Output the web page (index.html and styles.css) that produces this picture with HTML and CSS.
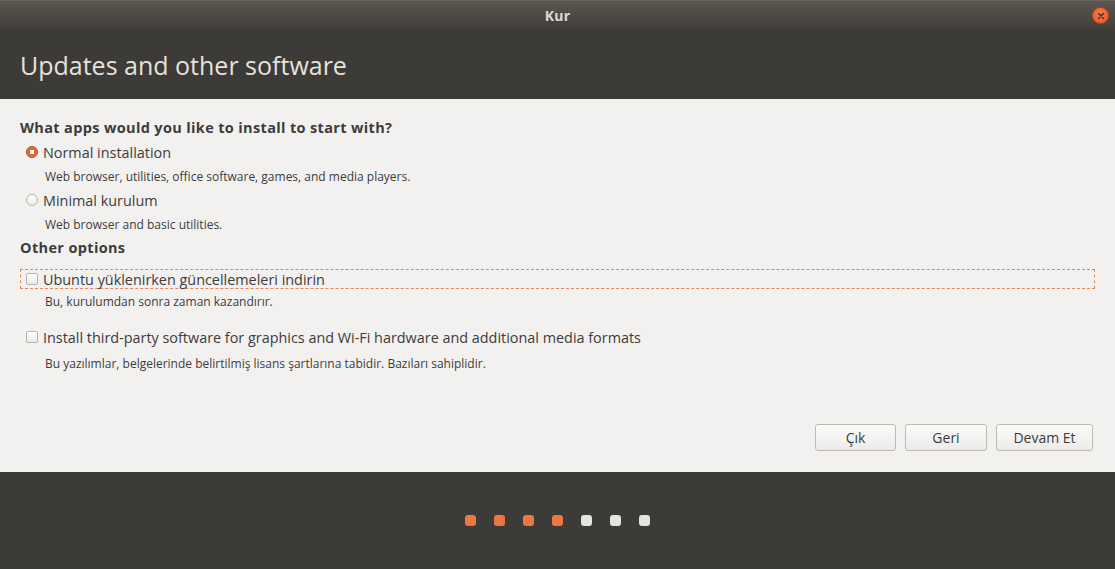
FILE: index.html
```html
<!DOCTYPE html>
<html>
<head>
<meta charset="utf-8">
<link rel="stylesheet" href="styles.css">
</head>
<body>
<div class="window">
  <div class="titlebar">
    <span class="title">Kur</span>
    <span class="close">
      <svg width="10" height="10" viewBox="0 0 10 10"><path d="M2.5 2.5 L7.5 7.5 M7.5 2.5 L2.5 7.5" stroke="#3c2a22" stroke-width="1.3" stroke-linecap="round"/></svg>
    </span>
  </div>
  <div class="header">
    <h1>Updates and other software</h1>
  </div>
  <div class="content">
    <div class="question">What apps would you like to install to start with?</div>
    <div class="option first">
      <span class="radio checked"></span>
      <span class="label">Normal installation</span>
    </div>
    <div class="desc d1">Web browser, utilities, office software, games, and media players.</div>
    <div class="option">
      <span class="radio"></span>
      <span class="label">Minimal kurulum</span>
    </div>
    <div class="desc d2">Web browser and basic utilities.</div>
    <div class="question">Other options</div>
    <div class="option check focused">
      <span class="checkbox"></span>
      <span class="label">Ubuntu yüklenirken güncellemeleri indirin</span>
    </div>
    <div class="desc d3">Bu, kurulumdan sonra zaman kazandırır.</div>
    <div class="option check second">
      <span class="checkbox"></span>
      <span class="label">Install third-party software for graphics and Wi-Fi hardware and additional media formats</span>
    </div>
    <div class="desc d4">Bu yazılımlar, belgelerinde belirtilmiş lisans şartlarına tabidir. Bazıları sahiplidir.</div>
    <div class="buttons">
      <button class="btn btn-quit">Çık</button>
      <button class="btn btn-back">Geri</button>
      <button class="btn btn-next">Devam Et</button>
    </div>
  </div>
  <div class="footer">
    <span class="dot done"></span>
    <span class="dot done"></span>
    <span class="dot done"></span>
    <span class="dot done"></span>
    <span class="dot"></span>
    <span class="dot"></span>
    <span class="dot"></span>
  </div>
</div>
</body>
</html>
```

FILE: styles.css
```css
* { box-sizing: border-box; }
html, body { margin: 0; padding: 0; }
body {
  width: 1115px;
  height: 569px;
  overflow: hidden;
  font-family: "Open Sans", "Noto Sans", "DejaVu Sans", sans-serif;
  background: #3c3b37;
}
.window {
  display: flex;
  flex-direction: column;
  height: 569px;
}
.titlebar {
  height: 30px;
  background: linear-gradient(#5a5650 0%, #4a4742 60%, #3f3d39 100%);
  display: flex;
  align-items: center;
  justify-content: center;
  position: relative;
  border-top: 1px solid #6b665f;
}
.title {
  color: #dfdbd2;
  font-weight: bold;
  font-size: 14px;
  letter-spacing: 0.2px;
}
.close {
  position: absolute;
  right: 6px;
  top: 6px;
  width: 17px;
  height: 17px;
  border-radius: 50%;
  background: radial-gradient(circle at 50% 35%, #f47a4e, #e4572a);
  border: 1px solid #b8481f;
  display: flex;
  align-items: center;
  justify-content: center;
}
.header {
  height: 69px;
  background: #3c3b37;
  display: flex;
  align-items: center;
  padding-left: 20px;
}
.header h1 {
  margin: 0;
  font-weight: normal;
  font-size: 25px;
  color: #e6e2dc;
  letter-spacing: 0;
  padding-top: 0;
}
.content {
  height: 373px;
  background: #f2f1f0;
  color: #3c3c3c;
  padding: 19px 20px 0 20px;
  display: flex;
  flex-direction: column;
}
.question {
  font-weight: bold;
  font-size: 14.5px;
  letter-spacing: 0.35px;
  color: #3c3c3c;
  height: 20px;
  line-height: 20px;
}
.option {
  display: flex;
  align-items: center;
  height: 20px;
  padding-left: 6px;
}
.option.first {
  margin-top: 4px;
}
.option .label {
  font-size: 14.4px;
  color: #3c3c3c;
  margin-left: 5px;
}
.radio {
  width: 12px;
  height: 12px;
  border-radius: 50%;
  border: 1px solid #b6b3ae;
  background: linear-gradient(#ffffff, #ecebe9);
}
.radio.checked {
  border: 1px solid #bc4d24;
  background: radial-gradient(circle, #ffffff 0 2px, #e4663a 2.5px);
}
.checkbox {
  width: 12px;
  height: 12px;
  border-radius: 2px;
  border: 1px solid #b6b3ae;
  background: linear-gradient(#ffffff, #ecebe9);
}
.desc {
  font-size: 12px;
  color: #3c3c3c;
  line-height: 22px;
  height: 28px;
  padding-left: 25px;
}
.d1, .d2 { padding-top: 4px; }
.d3 { padding-top: 2px; }
.d4 { padding-top: 6px; }
.option.check {
  margin-top: 11px;
}
.option.focused {
  border: 1px dashed #e5855c;
  padding-left: 5px;
  height: 20px;
}
.option.second {
  margin-top: 10px;
}
.buttons {
  margin-top: 49px;
  display: flex;
  justify-content: flex-end;
  gap: 9px;
  padding-right: 2px;
}
.btn {
  height: 27px;
  font-family: inherit;
  font-size: 14px;
  color: #3c3c3c;
  background: linear-gradient(#fbfbfa, #ecebe9);
  border: 1px solid #bdbab5;
  border-radius: 3px;
  padding: 0;
}
.btn-quit { width: 81px; }
.btn-back { width: 82px; }
.btn-next { width: 97px; }
.footer {
  flex: 1;
  background: #3c3b37;
  display: flex;
  justify-content: center;
  align-items: center;
  gap: 18px;
}
.dot {
  width: 11px;
  height: 11px;
  border-radius: 3px;
  background: #e4e3e1;
}
.dot.done {
  background: #ec7741;
}
```
